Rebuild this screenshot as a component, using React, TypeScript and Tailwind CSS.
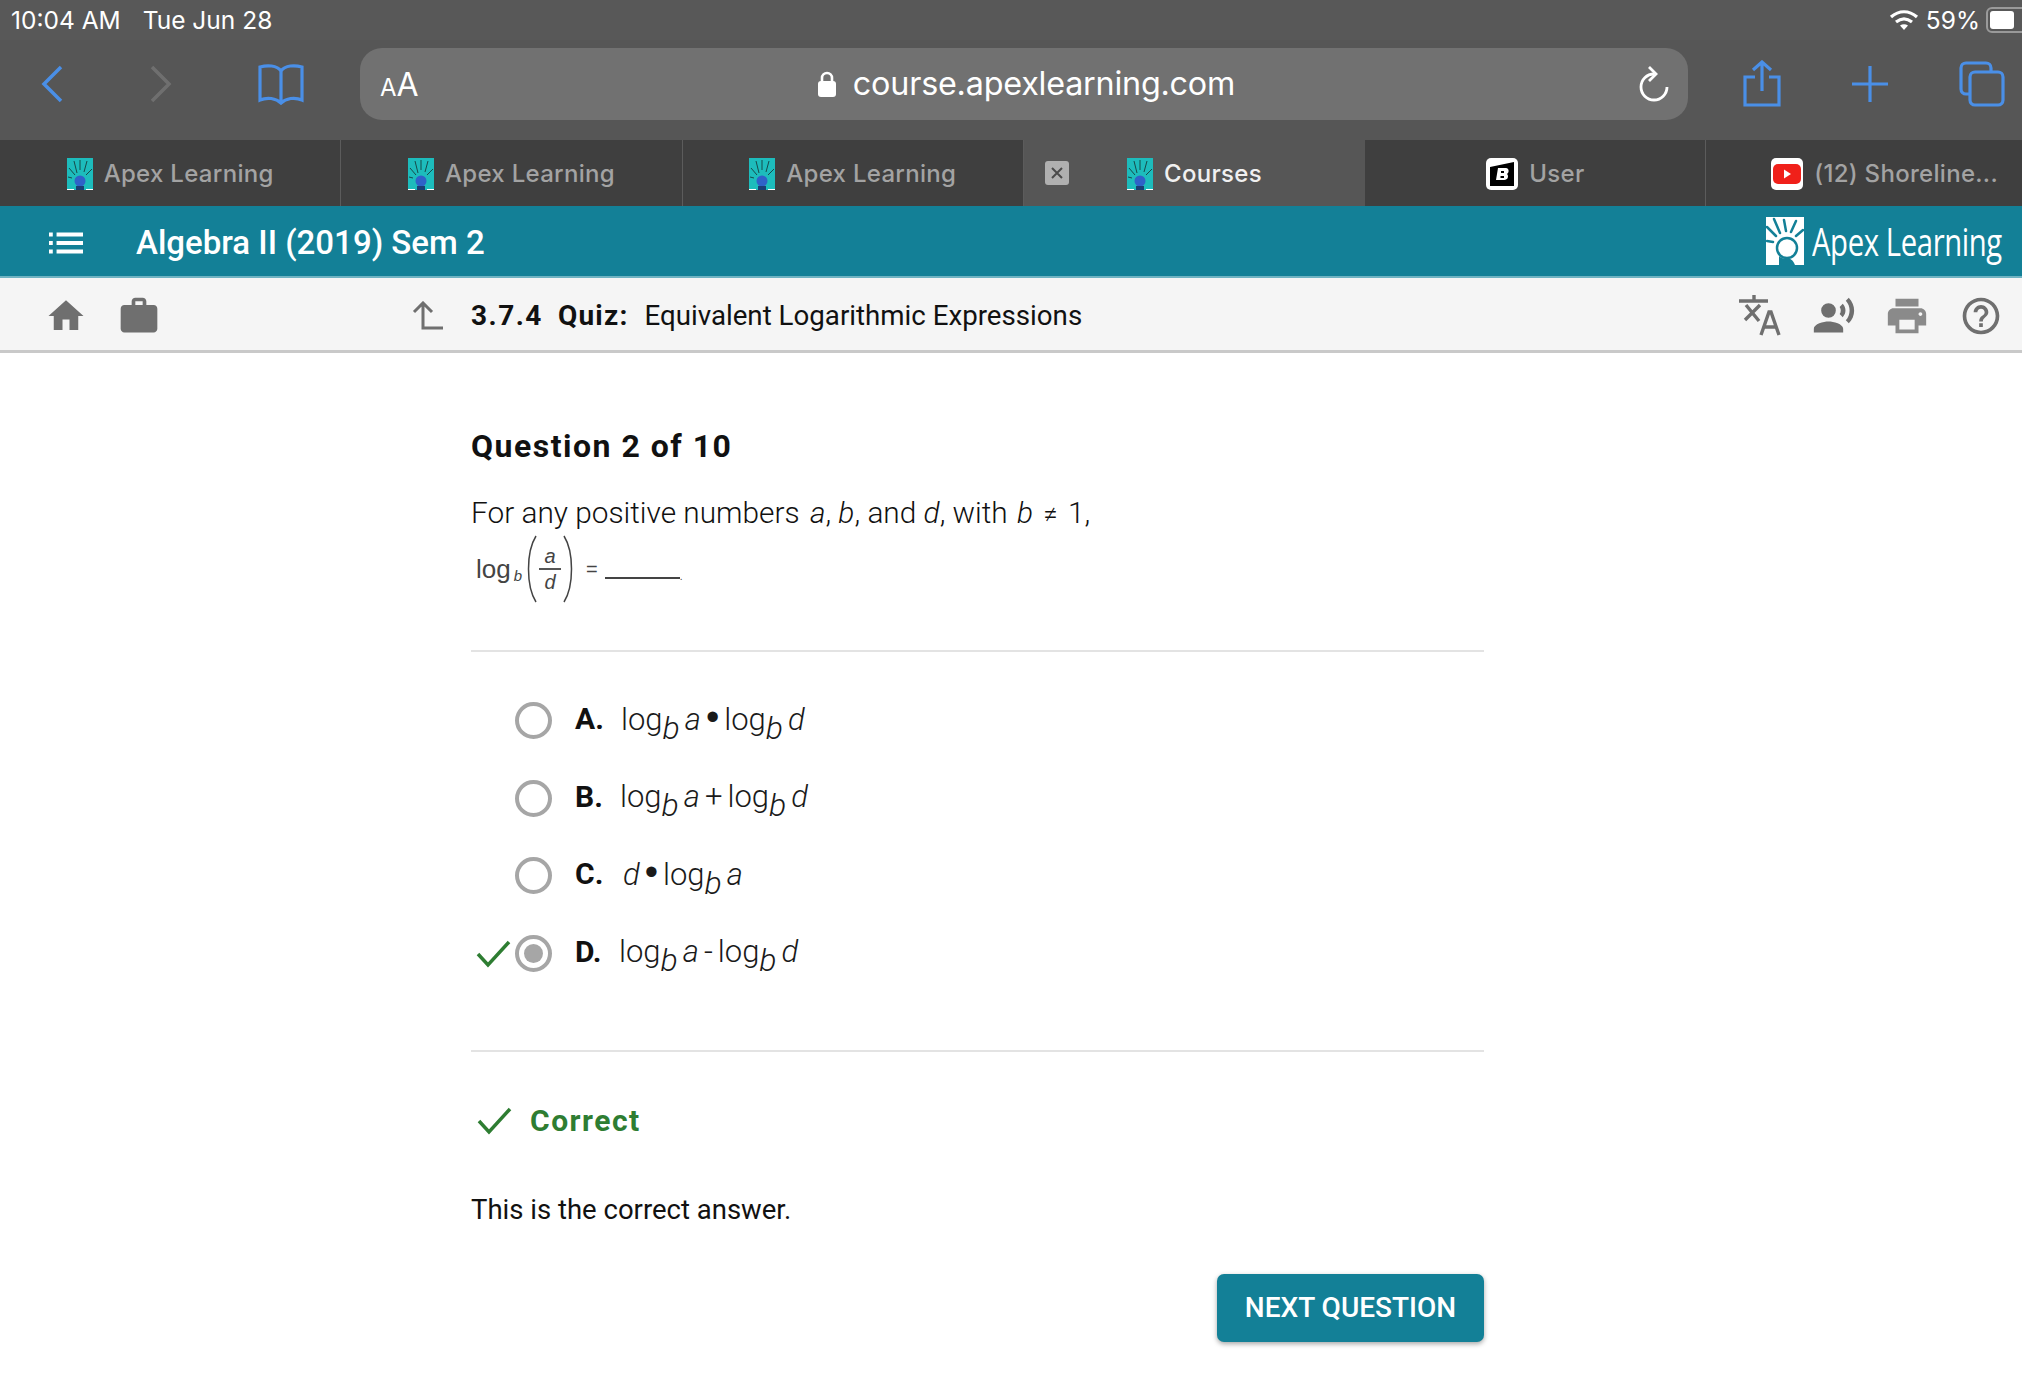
import React from 'react';

const TABS = [
  { label: 'Apex Learning', kind: 'apex' },
  { label: 'Apex Learning', kind: 'apex' },
  { label: 'Apex Learning', kind: 'apex' },
  { label: 'Courses', kind: 'apex', active: true },
  { label: 'User', kind: 'user' },
  { label: '(12) Shoreline...', kind: 'youtube' },
];

const OPTIONS = [
  { letter: 'A.', gap: 'ml-[14px]', parts: [['log', 'b'], 'a', '•', ['log', 'b'], 'd'] },
  { letter: 'B.', gap: 'ml-[13px]', parts: [['log', 'b'], 'a', '+', ['log', 'b'], 'd'] },
  { letter: 'C.', gap: 'ml-[16px]', parts: ['d', '•', ['log', 'b'], 'a'] },
  { letter: 'D.', gap: 'ml-[12px]', parts: [['log', 'b'], 'a', '-', ['log', 'b'], 'd'], selected: true },
];

function ApexFavicon() {
  return (
    <svg width="26" height="32" viewBox="0 0 26 32" className="shrink-0">
      <rect width="26" height="32" fill="#1dbcbc" />
      <g stroke="#174a4a" strokeWidth="1" fill="none">
        <path d="M7 3l3 12M13 2v10M20 3l-3 11M2 10l6 7M25 11l-6 6M1 19l4 1" />
      </g>
      <circle cx="13" cy="23" r="5.500" fill="#2f62c8" />
      <path d="M9 32v-4h8v4z" fill="#1b3d73" />
      <path d="M0 31h7v1H0zM19 31h7v1h-7z" fill="#ffffff" />
    </svg>
  );
}

function TabIcon({ kind }: { kind: string }) {
  if (kind === 'user') {
    return (
      <svg width="32" height="32" viewBox="0 0 32 32" className="shrink-0">
        <rect width="32" height="32" rx="5" fill="#ffffff" />
        <path d="M4 9l24-5v24l-24 0z" fill="#000000" />
        <path d="M12 10h8c3 0 3.500 4.500 1 6 2 2 1 6-3 6h-8z" fill="#ffffff" />
        <path d="M15 13h3v2h-3zM14.500 18h3.500v2h-3.500z" fill="#000000" />
      </svg>
    );
  }
  if (kind === 'youtube') {
    return (
      <svg width="32" height="32" viewBox="0 0 32 32" className="shrink-0">
        <rect width="32" height="32" rx="5" fill="#ffffff" />
        <rect x="2" y="6" width="28" height="20" rx="5" fill="#f0201a" />
        <path d="M13 11.500v9l7-4.500z" fill="#ffffff" />
      </svg>
    );
  }
  return <ApexFavicon />;
}

function BrowserTab({ label, kind, active }: { label: string; kind: string; active?: boolean }) {
  return (
    <div
      className={`relative flex h-full w-[341.300px] shrink-0 items-center justify-center gap-[11px] pt-[2px] ${
        active ? 'bg-[#565656]' : 'border-r border-[#5c5c5c] bg-[#3f3f3f]'
      } ${kind === 'youtube' ? 'pl-[16px]' : ''}`}
    >
      {active && (
        <div className="absolute left-[21px] top-[21px] flex h-[24px] w-[24px] items-center justify-center rounded-[3px] bg-[#b0b0b0]">
          <svg width="14" height="14" viewBox="0 0 14 14" stroke="#4a4a4a" strokeWidth="2">
            <path d="M2 2l10 10M12 2L2 12" />
          </svg>
        </div>
      )}
      <TabIcon kind={kind} />
      <span className={`font-[Inter] text-[24px] font-medium tracking-[0.3px] ${active ? 'text-[#f0f0f0]' : 'text-[#a3a3a3]'}`}>
        {label}
      </span>
    </div>
  );
}

function MathParts({ parts }: { parts: (string | string[])[] }) {
  return (
    <span className="flex items-baseline font-[Roboto] text-[31px] font-light text-[#1a1a1a]">
      {parts.map((part, i) =>
        Array.isArray(part) ? (
          <span key={i} className="mr-[5px]">
            {part[0]}
            <i className="relative top-[9px] text-[32px]">{part[1]}</i>
          </span>
        ) : part === 'a' || part === 'd' ? (
          <i key={i}>{part}</i>
        ) : part === '•' ? (
          <span key={i} className="mx-[5px] font-['Liberation_Sans'] text-[38px] leading-none">
            {part}
          </span>
        ) : (
          <span key={i} className="mx-[5px]">
            {part}
          </span>
        ),
      )}
    </span>
  );
}

function Option({ option }: { option: (typeof OPTIONS)[number] }) {
  return (
    <div className="relative flex h-[77.500px] items-center pl-[44px]">
      {option.selected && (
        <svg width="36" height="28" viewBox="0 0 36 28" className="absolute left-[5px] top-[25px]" fill="none" stroke="#2e7d32" strokeWidth="3.500">
          <path d="M2 14l10 11L33 2" />
        </svg>
      )}
      <div className="flex h-[37px] w-[37px] items-center justify-center rounded-full border-[4px] border-[#a6a6a6] bg-white">
        {option.selected && <div className="h-[19px] w-[19px] rounded-full bg-[#a6a6a6]" />}
      </div>
      <span className="mb-[4px] ml-[23px] w-[32px] font-[Roboto] text-[30px] font-bold text-[#111]">{option.letter}</span>
      <div className={`mb-[4px] ${option.gap}`}>
        <MathParts parts={option.parts} />
      </div>
    </div>
  );
}

function ApexLogo() {
  return (
    <div className="flex items-center">
      <svg width="38" height="48" viewBox="0 0 38 48" className="shrink-0">
        <rect width="38" height="48" fill="#ffffff" />
        <g stroke="#138097" strokeWidth="2.500" fill="none" strokeLinecap="round">
          <path d="M8 2l6 14M18 3l2 11M30 4l-5 11M37 13l-7 6M1 10l9 9M1 24l6 1" />
        </g>
        <circle cx="21" cy="31" r="10" fill="#ffffff" stroke="#138097" strokeWidth="2.500" />
        <path d="M13 48v-9c2 2 4 3 8 2 3 0 6 2 8 7z" fill="#138097" />
      </svg>
      <span className="ml-[8px] inline-block w-[194px] origin-left scale-x-[0.77] whitespace-nowrap font-['Open_Sans'] text-[38px] font-medium tracking-[-0.5px] text-white">
        Apex Learning
      </span>
    </div>
  );
}

function GrayIcon({ d, size = 40, fill = '#6f6f6f', className }: { d: string; size?: number; fill?: string; className?: string }) {
  return (
    <svg width={size} height={size} viewBox="0 0 24 24" fill={fill} className={className}>
      <path d={d} />
    </svg>
  );
}

export default function App() {
  return (
    <div className="flex h-[1396px] w-[2022px] flex-col overflow-hidden bg-white">
      {/* ipad status bar */}
      <div className="flex h-[40px] items-center justify-between bg-[#585858] pl-[11px] font-[Inter] text-[24.500px] text-white">
        <div className="flex gap-[22px]">
          <span>10:04 AM</span>
          <span>Tue Jun 28</span>
        </div>
        <div className="-mr-[8px] flex items-center">
          <svg width="30" height="24" viewBox="0 0 30 24" fill="none" stroke="#ffffff" strokeWidth="3.200">
            <path d="M2 9c8-7 18-7 26 0M7 14c5-4 11-4 16 0" />
            <path d="M11 17.500c2.500-1.800 5.500-1.800 8 0L15 22z" fill="#ffffff" stroke="none" />
          </svg>
          <span className="ml-[7px]">59%</span>
          <div className="ml-[6px] h-[26px] w-[44px] shrink-0 rounded-[6px] border-2 border-[#9a9a9a] p-[2px]">
            <div className="h-full w-[24px] rounded-[3px] bg-white" />
          </div>
        </div>
      </div>

      {/* safari toolbar */}
      <div className="flex h-[100px] items-center bg-[#565656] pb-[12px]">
        <div className="flex w-[104px] justify-center">
          <svg width="24" height="40" viewBox="0 0 24 40" fill="none" stroke="#4a8fe7" strokeWidth="3.500">
            <path d="M21 3L4 20l17 17" />
          </svg>
        </div>
        <div className="flex w-[114px] justify-center">
          <svg width="24" height="40" viewBox="0 0 24 40" fill="none" stroke="#6f6f6f" strokeWidth="3.500">
            <path d="M3 3l17 17L3 37" />
          </svg>
        </div>
        <div className="flex w-[142px] justify-start pl-[39px]">
          <svg width="48" height="42" viewBox="0 0 48 42" fill="none" stroke="#4a8fe7" strokeWidth="3.200">
            <path d="M24 8C20 2 10 2 3 4v33c7-3 16-2 21 3 5-5 14-6 21-3V4C38 2 28 2 24 8zM24 8v32" />
          </svg>
        </div>
        <div className="relative flex h-[72px] w-[1328px] items-center justify-center rounded-[22px] bg-[#717171] pl-[4px]">
          <span className="absolute left-[20px] top-[13px] font-[Inter] text-white">
            <span className="text-[24px]">A</span>
            <span className="text-[32px]">A</span>
          </span>
          <svg width="20" height="28" viewBox="0 0 20 28" className="mr-[16px]">
            <path d="M5 12V8a5 5 0 0 1 10 0v4" fill="none" stroke="#ffffff" strokeWidth="2.600" />
            <rect x="1" y="11" width="18" height="16" rx="3" fill="#ffffff" />
          </svg>
          <span className="font-[Inter] text-[32.300px] tracking-[-0.2px] text-white">course.apexlearning.com</span>
          <svg width="34" height="40" viewBox="0 0 34 40" fill="none" stroke="#ffffff" strokeWidth="2.800" className="absolute right-[17px] top-[17px]">
            <path d="M17 9A13 13 0 1 0 30 22" />
            <path d="M12 2l7 7-7 7" />
          </svg>
        </div>
        <div className="flex w-[148px] justify-center">
          <svg width="40" height="48" viewBox="0 0 40 48" fill="none" stroke="#4a8fe7" strokeWidth="3.200">
            <path d="M20 2v29M11 10l9-8 9 8M13 17H3v28h34V17H27" />
          </svg>
        </div>
        <div className="flex w-[68px] justify-center">
          <svg width="36" height="36" viewBox="0 0 36 36" stroke="#4a8fe7" strokeWidth="3.200">
            <path d="M18 0v36M0 18h36" />
          </svg>
        </div>
        <div className="flex w-[118px] pl-[55px]">
          <svg width="46" height="46" viewBox="0 0 46 46" fill="none" stroke="#4a8fe7" strokeWidth="3.200" className="shrink-0">
            <path d="M10 33H7a5 5 0 0 1-5-5V7a5 5 0 0 1 5-5h20a5 5 0 0 1 5 5v3" />
            <rect x="11" y="11" width="33" height="33" rx="5" />
          </svg>
        </div>
      </div>

      {/* tabs */}
      <div className="flex h-[66px]">
        {TABS.map((tab, i) => (
          <BrowserTab key={i} label={tab.label} kind={tab.kind} active={tab.active} />
        ))}
      </div>

      {/* course header */}
      <div className="flex h-[72px] items-center justify-between border-b-2 border-[#6fb3c2] bg-[#138097] pr-[16px] text-white">
        <div className="mt-[3px] flex items-center">
          <svg width="34" height="22" viewBox="0 0 36 22" fill="#ffffff" className="ml-[49px]">
            <path d="M0 0h4v4H0zM8 0h28v4H8zM0 9h4v4H0zM8 9h28v4H8zM0 18h4v4H0zM8 18h28v4H8z" />
          </svg>
          <span className="ml-[53px] font-[Roboto] text-[33px] font-medium">Algebra II (2019) Sem 2</span>
        </div>
        <ApexLogo />
      </div>

      {/* lesson bar */}
      <div className="flex h-[75px] items-center border-b-[3px] border-[#c9c9c9] bg-[#f5f5f5] pt-[3px]">
        <div className="ml-[45px]">
          <GrayIcon size={42} d="M10 20v-6h4v6h5v-8h3L12 3 2 12h3v8z" />
        </div>
        <div className="ml-[30px]">
          <GrayIcon size={44} d="M20 6h-4V4c0-1.110-.890-2-2-2h-4c-1.110 0-2 .890-2 2v2H4c-1.110 0-1.990.890-1.990 2L2 19c0 1.110.890 2 2 2h16c1.110 0 2-.890 2-2V8c0-1.110-.890-2-2-2zm-6 0h-4V4h4v2z" />
        </div>
        <svg width="32" height="30" viewBox="0 0 32 30" fill="none" stroke="#6f6f6f" strokeWidth="3" className="ml-[251px]">
          <path d="M2 11l9-9 9 9M11 2v25h20" />
        </svg>
        <div className="ml-[27px] flex items-baseline font-[Roboto] text-[#111]">
          <span className="text-[28px] font-bold tracking-[1.500px]">3.7.4</span>
          <span className="ml-[15px] text-[28px] font-bold tracking-[1.200px]">Quiz:</span>
          <span className="ml-[16px] text-[27.700px]">Equivalent Logarithmic Expressions</span>
        </div>
        <div className="ml-auto flex items-center pr-[19px]">
          <svg width="42" height="42" viewBox="0 0 42 42" fill="none" stroke="#6f6f6f" strokeWidth="3.400">
            <path d="M0 6h29M15 0v6M6 25L21 10M7 10l13 16M22 40l8-23h2l8 23M25 32h12" />
          </svg>
          <GrayIcon size={44} className="ml-[31px]" d="M9 5a4 4 0 1 1 0 8 4 4 0 0 1 0-8zM9 15c-2.670 0-8 1.340-8 4v2h16v-2c0-2.660-5.330-4-8-4zm7.760-9.640l-1.680 1.690c.840 1.180.840 2.710 0 3.890l1.680 1.690c2.020-2.020 2.020-5.070 0-7.270zM20.070 2l-1.630 1.630c2.770 3.020 2.770 7.560 0 10.740L20.070 16c3.900-3.890 3.910-9.950 0-14z" />
          <GrayIcon size={46} fill="#8a8a8a" className="ml-[28px]" d="M19 8H5c-1.660 0-3 1.340-3 3v6h4v4h12v-4h4v-6c0-1.660-1.340-3-3-3zm-3 11H8v-5h8v5zm3-7c-.550 0-1-.450-1-1s.450-1 1-1 1 .450 1 1-.450 1-1 1zm-1-9H6v4h12V3z" />
          <GrayIcon size={44} className="ml-[29px]" d="M11 18h2v-2h-2v2zm1-16C6.480 2 2 6.480 2 12s4.480 10 10 10 10-4.480 10-10S17.520 2 12 2zm0 18c-4.410 0-8-3.590-8-8s3.590-8 8-8 8 3.590 8 8-3.590 8-8 8zm0-14c-2.210 0-4 1.790-4 4h2c0-1.100.900-2 2-2s2 .900 2 2c0 2-3 1.750-3 5h2c0-2.250 3-2.500 3-5 0-2.210-1.790-4-4-4z" />
        </div>
      </div>

      {/* question */}
      <div className="ml-[471px] w-[1013px] pt-[71px]">
        <h1 className="font-[Roboto] text-[32px] leading-[44px] font-bold tracking-[1.500px] text-[#111]">Question 2 of 10</h1>
        <p className="mt-[23px] font-[Roboto] text-[29.800px] leading-[44px] font-light text-[#111]">
          For any positive numbers <i className="ml-[3px]">a</i>, <i>b</i>, and <i>d</i>, with <i className="ml-[2px]">b</i>{' '}
          <span className="mx-[3px] text-[26px]">≠</span> 1,
        </p>
        <div className="-mt-[2px] flex h-[70px] items-center pl-[5px] font-['Liberation_Sans'] text-[#444]">
          <span className="text-[26px]">log</span>
          <i className="mt-[14px] ml-[3px] text-[15px]">b</i>
          <svg width="16" height="70" viewBox="0 0 16 70" fill="none" stroke="#444" strokeWidth="1.500" className="ml-[1px]">
            <path d="M13 2C3 18 3 52 13 68" />
          </svg>
          <span className="flex w-[22px] flex-col items-center text-[20px] leading-[24px] italic">
            <span className="w-full border-b-2 border-[#555] text-center">a</span>
            <span>d</span>
          </span>
          <svg width="16" height="70" viewBox="0 0 16 70" fill="none" stroke="#444" strokeWidth="1.500">
            <path d="M3 2c10 16 10 50 0 66" />
          </svg>
          <span className="ml-[9px] text-[20px]">=</span>
          <span className="ml-[7px] mt-[18px] h-[2px] w-[75px] bg-[#444]" />
          <span className="mt-[14px] text-[10px]">.</span>
        </div>

        <div className="mt-[46px] border-t-2 border-[#e3e3e3] pt-[30px] pb-[58px]">
          {OPTIONS.map((option) => (
            <Option key={option.letter} option={option} />
          ))}
        </div>

        <div className="border-t-2 border-[#e3e3e3] pt-[46px]">
          <div className="flex items-center pl-[6px]">
            <svg width="36" height="28" viewBox="0 0 36 28" fill="none" stroke="#2e7d32" strokeWidth="3.500">
              <path d="M2 14l10 11L33 2" />
            </svg>
            <span className="ml-[17px] font-[Roboto] text-[30px] font-bold tracking-[1.500px] text-[#2e7d32]">Correct</span>
          </div>
          <p className="mt-[46px] font-[Roboto] text-[27.500px] text-[#111]">This is the correct answer.</p>
        </div>

        <div className="mt-[44px] flex justify-end">
          <button className="flex h-[68px] w-[267px] items-center justify-center rounded-[7px] bg-[#138097] font-[Roboto] text-[28px] font-medium text-white shadow-[0_2px_5px_rgba(0,0,0,0.35)]">
            NEXT QUESTION
          </button>
        </div>
      </div>
    </div>
  );
}
